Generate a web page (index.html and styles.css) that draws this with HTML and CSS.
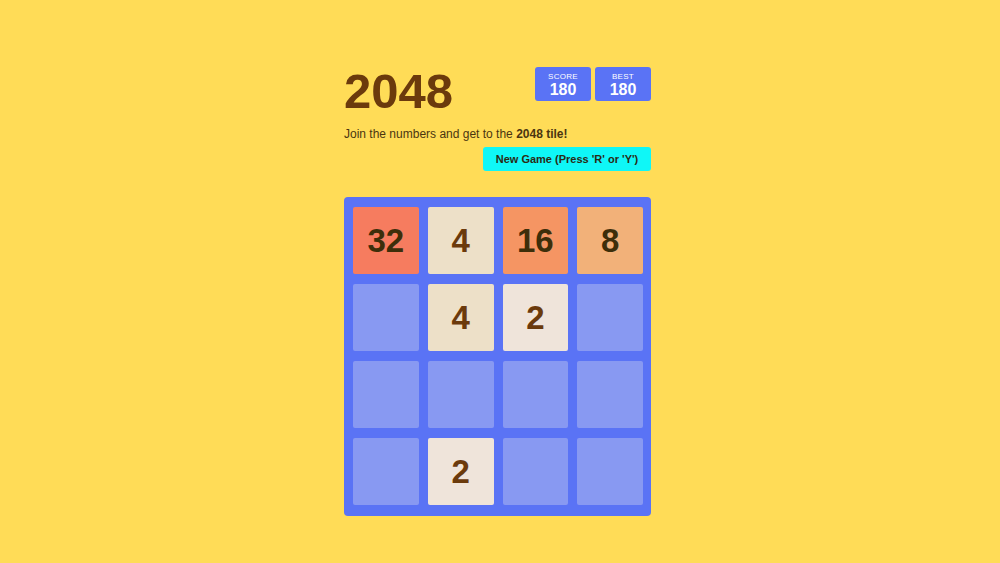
FILE: index.html
```html
<!DOCTYPE html>
<html>
<head>
<meta charset="utf-8">
<link rel="stylesheet" href="styles.css">
</head>
<body>
<div class="game">
  <div class="header">
    <h1 class="title">2048</h1>
    <div class="scores">
      <div class="score-box"><div class="label">SCORE</div><div class="value">180</div></div>
      <div class="score-box"><div class="label">BEST</div><div class="value">180</div></div>
    </div>
  </div>
  <p class="intro">Join the numbers and get to the <b>2048 tile!</b></p>
  <div class="actions"><button class="new-game">New Game (Press 'R' or 'Y')</button></div>
  <div class="board">
    <div class="tile t32">32</div>
    <div class="tile t4">4</div>
    <div class="tile t16">16</div>
    <div class="tile t8">8</div>
    <div class="tile"></div>
    <div class="tile t4">4</div>
    <div class="tile t2">2</div>
    <div class="tile"></div>
    <div class="tile"></div>
    <div class="tile"></div>
    <div class="tile"></div>
    <div class="tile"></div>
    <div class="tile"></div>
    <div class="tile t2">2</div>
    <div class="tile"></div>
    <div class="tile"></div>
  </div>
</div>
</body>
</html>
```
FILE: styles.css
```css
html, body {
  margin: 0;
  padding: 0;
  background: #ffdc57;
  font-family: "Liberation Sans", Arial, sans-serif;
}
.game {
  width: 307px;
  margin-left: calc(50% - 156px);
  padding-top: 66px;
}
.header {
  display: flex;
  justify-content: space-between;
  align-items: flex-start;
}
.title {
  margin: 0;
  font-size: 49px;
  line-height: 50px;
  font-weight: bold;
  color: #6b3a0c;
}
.scores {
  display: flex;
  gap: 4px;
  padding-top: 1px;
}
.score-box {
  width: 56px;
  height: 34px;
  background: #5a73f5;
  border-radius: 3px;
  color: #fff;
  text-align: center;
  box-sizing: border-box;
  padding-top: 5px;
}
.label {
  font-size: 8px;
  line-height: 9px;
  letter-spacing: 0.3px;
}
.value {
  font-size: 16px;
  line-height: 17px;
  font-weight: bold;
}
.intro {
  margin: 11px 0 0;
  font-size: 12px;
  line-height: 14px;
  color: #4b3510;
}
.actions {
  display: flex;
  justify-content: flex-end;
  margin-top: 6px;
}
.new-game {
  width: 168px;
  height: 24px;
  border: none;
  border-radius: 3px;
  background: #0ff7f7;
  font-family: "Liberation Sans", Arial, sans-serif;
  font-size: 11px;
  font-weight: bold;
  color: #2a2a14;
  padding: 0;
}
.board {
  margin-top: 26px;
  background: #5a73f5;
  border-radius: 4px;
  padding: 10px 8px 11px 9px;
  display: grid;
  grid-template-columns: repeat(4, 1fr);
  grid-auto-rows: 67px;
  column-gap: 9px;
  row-gap: 10px;
}
.tile {
  background: #8899f2;
  border-radius: 2px;
  display: flex;
  align-items: center;
  justify-content: center;
  font-size: 33px;
  font-weight: bold;
  color: #6b3a0c;
}
.t2 { background: #efe4da; }
.t4 { background: #ede0c8; }
.t8 { background: #f2b179; color: #3d2e0a; }
.t16 { background: #f59563; color: #3d2e0a; }
.t32 { background: #f67c5f; color: #3d2e0a; }
```
